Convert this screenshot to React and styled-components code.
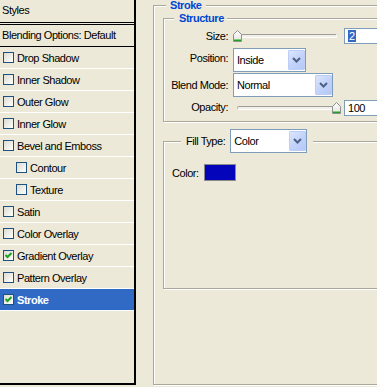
import React from "react";
import styled, { createGlobalStyle } from "styled-components";

const GlobalStyle = createGlobalStyle`
  html, body {
    margin: 0;
    padding: 0;
    background: #ece9d8;
    overflow: hidden;
  }
  body {
    font-family: "Liberation Sans", Arial, sans-serif;
    font-size: 11px;
    letter-spacing: -0.45px;
    color: #000;
  }
`;

const Dialog = styled.div`
  display: flex;
  width: 377px;
  height: 387px;
  overflow: hidden;
`;

/* ---------- left list ---------- */

const StylesPanel = styled.div`
  flex: none;
  box-sizing: border-box;
  width: 136px;
  height: 385px;
  border-right: 2px solid #000;
  border-bottom: 2px solid #000;
`;

const PanelTitle = styled.div`
  height: 22px;
  line-height: 20px;
  padding-left: 2px;
  border-bottom: 3px double #000;
`;

const BlendRow = styled.div`
  height: 21px;
  line-height: 20px;
  padding-left: 2px;
  border-bottom: 1px solid #000;
`;

const StyleRow = styled.div`
  display: flex;
  align-items: center;
  gap: 3px;
  height: 21px;
  padding-left: ${(p) => (p.indent ? 16 : 3)}px;
  border-bottom: 1px solid #fff;
  background: ${(p) => (p.selected ? "#316ac5" : "transparent")};
  color: ${(p) => (p.selected ? "#fff" : "#000")};
  font-weight: ${(p) => (p.selected ? "bold" : "normal")};
`;

const CheckBox = styled.span`
  flex: none;
  box-sizing: border-box;
  width: 11px;
  height: 11px;
  border: 1px solid #1c5180;
  background: linear-gradient(135deg, #dcdbd3 0%, #f4f4f0 70%, #ffffff 100%);
  display: flex;
  align-items: center;
  justify-content: center;
`;

/* ---------- right side ---------- */

const RightPane = styled.div`
  flex: none;
  width: 260px;
  padding-left: 17px;
`;

const Group = styled.fieldset`
  box-sizing: border-box;
  margin: ${(p) => p.mt || 0}px 0 0 ${(p) => p.ml || 0}px;
  padding: ${(p) => p.pad || "0"};
  width: ${(p) => p.w}px;
  height: ${(p) => (p.h ? `${p.h}px` : "auto")};
  min-width: 0;
  border: 1px solid #aca899;
  box-shadow: inset 1px 1px 0 #fff, 1px 1px 0 #fff;
`;

const Legend = styled.legend`
  margin-left: ${(p) => p.ml}px;
  padding: ${(p) => p.pad};
  line-height: ${(p) => p.lh}px;
  font-weight: bold;
  color: #0046d5;
  background: #ece9d8;
  display: flex;
  align-items: center;
  gap: 5px;
`;

const PlainLegend = styled(Legend)`
  font-weight: normal;
  color: #000;
`;

const FormGrid = styled.div`
  display: grid;
  grid-template-columns: 64px auto;
  column-gap: 5px;
  align-items: center;
  padding: 4px 0 5px 0;
`;

const Label = styled.span`
  text-align: right;
`;

const Control = styled.div`
  display: flex;
  align-items: center;
  gap: 3px;
  height: ${(p) => p.h}px;
  margin-top: ${(p) => p.gap || 0}px;
`;

const SliderBox = styled.div`
  position: relative;
  width: 108px;
  height: 16px;
`;

const Track = styled.div`
  box-sizing: border-box;
  margin: 6px 4px 0 4px;
  height: 4px;
  border-radius: 2px;
  border-top: 1px solid #9d9c99;
  border-left: 1px solid #b8b6ab;
  border-bottom: 1px solid #fff;
  border-right: 1px solid #fff;
  background: #f1efe6;
`;

const Thumb = styled.div`
  position: absolute;
  top: 2px;
  width: 9px;
  height: 12px;
  line-height: 0;
`;

const NumBox = styled.div`
  box-sizing: border-box;
  width: 45px;
  height: 16px;
  border: 1px solid #7f9db9;
  background: #fff;
  padding: 0 3px;
  line-height: 14px;
`;

const Selected = styled.span`
  background: #316ac5;
  color: #fff;
  padding: 0 1px;
`;

const Combo = styled.div`
  box-sizing: border-box;
  display: flex;
  align-items: center;
  width: ${(p) => p.w}px;
  height: 24px;
  border: 1px solid #7f9db9;
  background: #fff;
  font-weight: normal;
  color: #000;
`;

const ComboText = styled.span`
  flex: 1;
  padding-left: 3px;
`;

const ComboButton = styled.span`
  flex: none;
  box-sizing: border-box;
  width: 17px;
  height: 20px;
  margin: 1px 0;
  border: 1px solid #bccdf6;
  border-radius: 1px;
  background: linear-gradient(135deg, #dce6fd 0%, #c3d3fa 50%, #b5c9f7 100%);
  display: flex;
  align-items: center;
  justify-content: center;
`;

const ColorRow = styled.div`
  display: flex;
  align-items: center;
  gap: 5px;
`;

const Swatch = styled.span`
  box-sizing: border-box;
  width: 32px;
  height: 17px;
  border: 1px solid #8a8a8a;
  background: ${(p) => p.color};
`;

function Check({ checked }) {
  return (
    <CheckBox>
      {checked && (
        <svg width="7" height="7" viewBox="0 0 7 7">
          <polyline points="0.5,3 2.5,5 6.5,1" fill="none" stroke="#21a121" strokeWidth="2" />
        </svg>
      )}
    </CheckBox>
  );
}

function Slider({ value, min, max }) {
  const left = Math.round(((value - min) / (max - min)) * 99);
  return (
    <SliderBox>
      <Track />
      <Thumb style={{ left }}>
        <svg width="9" height="12" viewBox="0 0 9 12">
          <defs>
            <linearGradient id="thumbFill" x1="0" y1="0" x2="0" y2="1">
              <stop offset="0" stopColor="#ffffff" />
              <stop offset="1" stopColor="#e4e3dc" />
            </linearGradient>
          </defs>
          <path d="M0.5 4.5 L4.5 0.5 L8.5 4.5 V11.5 H0.5 Z" fill="url(#thumbFill)" stroke="#8e8f8f" />
          <path d="M1 9.5 H8" stroke="#7ad27a" />
          <path d="M1 10.5 H8" stroke="#21a121" />
        </svg>
      </Thumb>
    </SliderBox>
  );
}

function Select({ width, value }) {
  return (
    <Combo w={width}>
      <ComboText>{value}</ComboText>
      <ComboButton>
        <svg width="9" height="6" viewBox="0 0 9 6">
          <polyline points="1,1 4.5,4.5 8,1" fill="none" stroke="#4d6185" strokeWidth="2" />
        </svg>
      </ComboButton>
    </Combo>
  );
}

const styleItems = [
  { name: "Drop Shadow" },
  { name: "Inner Shadow" },
  { name: "Outer Glow" },
  { name: "Inner Glow" },
  { name: "Bevel and Emboss" },
  { name: "Contour", indent: true },
  { name: "Texture", indent: true },
  { name: "Satin" },
  { name: "Color Overlay" },
  { name: "Gradient Overlay", checked: true },
  { name: "Pattern Overlay" },
  { name: "Stroke", checked: true, selected: true },
];

export default function App() {
  return (
    <Dialog>
      <GlobalStyle />
      <StylesPanel>
        <PanelTitle>Styles</PanelTitle>
        <BlendRow>Blending Options: Default</BlendRow>
        {styleItems.map((item) => (
          <StyleRow key={item.name} indent={item.indent} selected={item.selected}>
            <Check checked={item.checked} />
            <span>{item.name}</span>
          </StyleRow>
        ))}
      </StylesPanel>

      <RightPane>
        <Group w={250} h={385}>
          <Legend ml={12} pad="0 4px" lh={11}>Stroke</Legend>

          <Group w={230} ml={9} mt={2}>
            <Legend ml={10} pad="0 3px 0 5px" lh={11}>Structure</Legend>
            <FormGrid>
              <Label>Size:</Label>
              <Control h={16}>
                <Slider value={2} min={1} max={250} />
                <NumBox><Selected>2</Selected></NumBox>
              </Control>

              <Label>Position:</Label>
              <Control h={24} gap={4}>
                <Select width={73} value="Inside" />
              </Control>

              <Label>Blend Mode:</Label>
              <Control h={24} gap={1}>
                <Select width={100} value="Normal" />
              </Control>

              <Label>Opacity:</Label>
              <Control h={16} gap={3}>
                <Slider value={100} min={0} max={100} />
                <NumBox>100</NumBox>
              </Control>
            </FormGrid>
          </Group>

          <Group w={230} ml={9} mt={7} h={160} pad="11px 0 0 8px">
            <PlainLegend ml={9} pad="0 6px 0 5px" lh={24}>
              <span>Fill Type:</span>
              <Select width={77} value="Color" />
            </PlainLegend>
            <ColorRow>
              <span>Color:</span>
              <Swatch color="#0404bb" />
            </ColorRow>
          </Group>
        </Group>
      </RightPane>
    </Dialog>
  );
}
